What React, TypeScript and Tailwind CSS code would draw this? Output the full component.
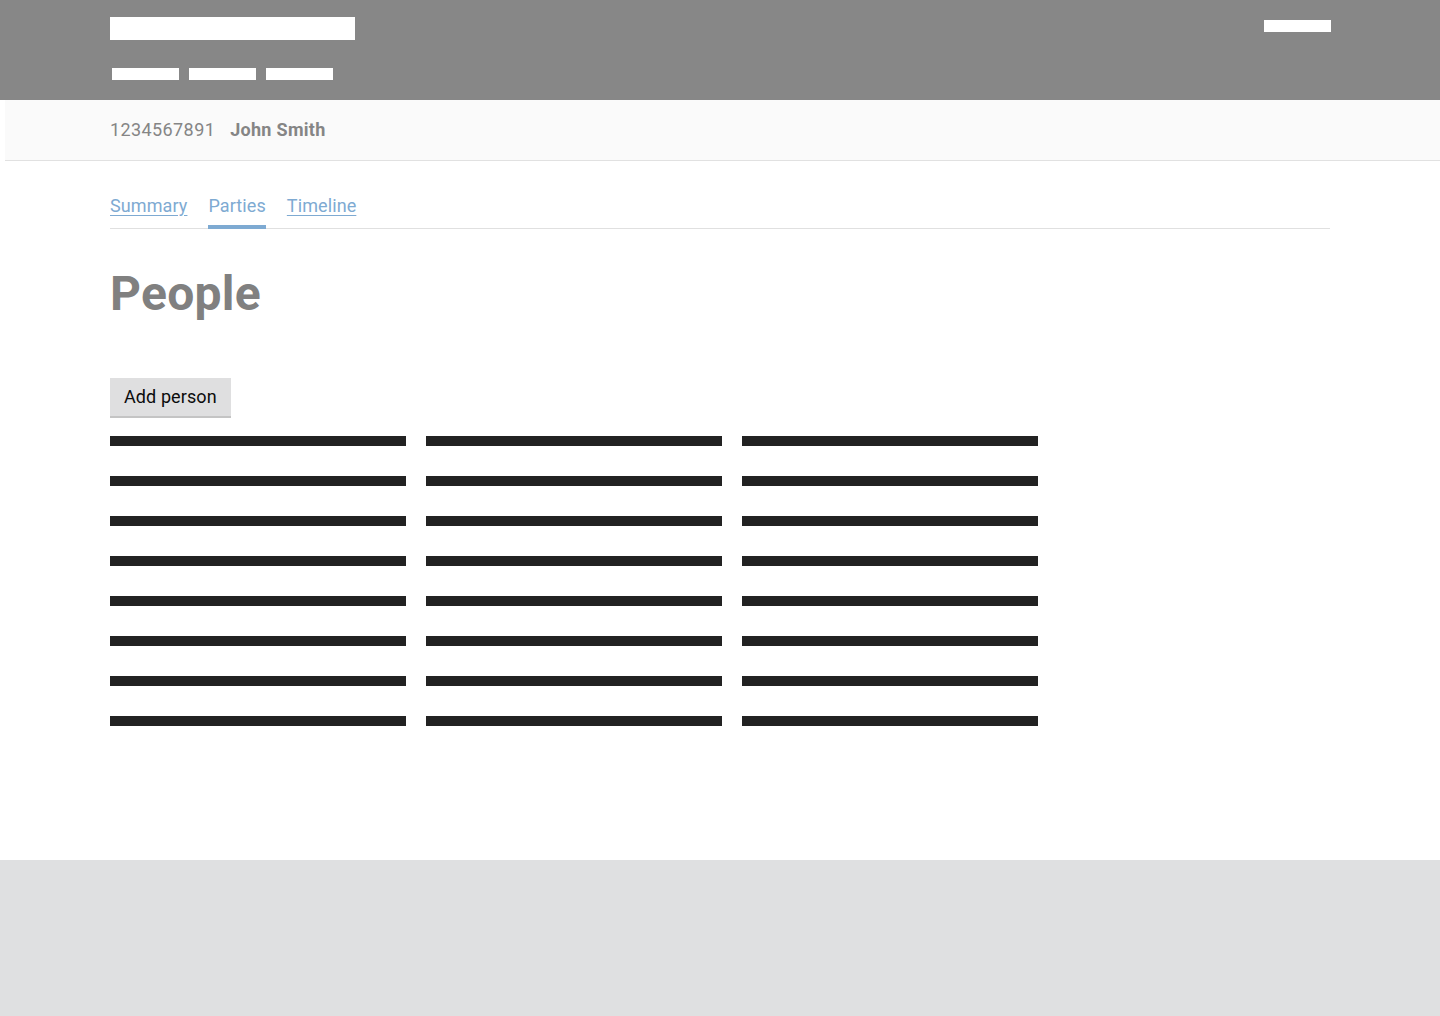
const FONT = "font-['Roboto','Noto_Sans',sans-serif]";

const ROWS = Array.from({ length: 8 }, (_, i) => i);
const COLS = [0, 1, 2];

function Header() {
  return (
    <header className="h-[100px] bg-[#878787]">
      <div className="mx-auto flex h-full w-[1220px] justify-between">
        <div className="flex flex-col pt-[17px]">
          <div className="h-[23px] w-[245px] bg-white" />
          <nav className="mt-[28px] flex gap-[10px] pl-[2px]">
            <div className="h-[12px] w-[67px] bg-white" />
            <div className="h-[12px] w-[67px] bg-white" />
            <div className="h-[12px] w-[67px] bg-white" />
          </nav>
        </div>
        <div className="pt-[20px]">
          <div className="mr-[-1px] h-[12px] w-[67px] bg-white" />
        </div>
      </div>
    </header>
  );
}

function CaseBar() {
  return (
    <div className="ml-[5px] h-[61px] border-b border-[#e1e1e1] bg-[#fafafa]">
      <div className="mx-auto flex w-[1220px] -translate-x-[2.5px] items-center gap-[15px] pt-[18px] text-[18px] leading-[24px] tracking-[0.4px] text-[#858585]">
        <span>1234567891</span>
        <span className="font-bold tracking-[0.3px]">John Smith</span>
      </div>
    </div>
  );
}

function Tabs() {
  return (
    <div className="flex gap-[21px] border-b border-[#e0e0e0] text-[18px] leading-[24px] tracking-[0.1px] text-[#7eaad2]">
      <a className="pb-[10px] underline underline-offset-[3px]">Summary</a>
      <a className="-mb-px border-b-[4px] border-[#7eaad2] pb-[6px]">Parties</a>
      <a className="pb-[10px] underline underline-offset-[3px]">Timeline</a>
    </div>
  );
}

export default function App() {
  return (
    <div className={`${FONT} flex min-h-[1016px] flex-col bg-white`}>
      <Header />
      <CaseBar />
      <main className="mx-auto w-[1220px] flex-1 pt-[33px]">
        <Tabs />
        <h1 className="mt-[36px] text-[48px] font-bold leading-[58px] tracking-[0.3px] text-[#808080]">People</h1>
        <button className="mt-[55px] h-[40px] border-b-2 border-[#c4c4c4] bg-[#dfdfe0] px-[14px] text-[18px] leading-[24px] tracking-[0.1px] text-[#0b0c0c]">
          Add person
        </button>
        <div className="mt-[18px] flex flex-col gap-[30px]">
          {ROWS.map((r) => (
            <div key={r} className="flex gap-[20px]">
              {COLS.map((c) => (
                <div key={c} className="h-[10px] w-[296px] bg-[#222222]" />
              ))}
            </div>
          ))}
        </div>
      </main>
      <footer className="mt-[130px] h-[156px] bg-[#dfe0e1]" />
    </div>
  );
}
